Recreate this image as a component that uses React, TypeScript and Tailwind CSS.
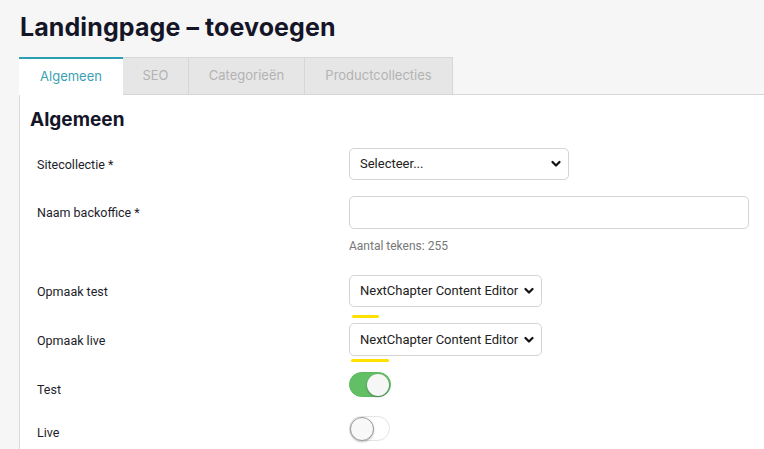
import { ReactNode } from "react";

const tabs = ["Algemeen", "SEO", "Categorieën", "Productcollecties"];

const Chevron = () => (
  <svg width="10" height="8" viewBox="0 0 10 8" className="shrink-0">
    <path d="M1.5 2 L5 5.5 L8.5 2" fill="none" stroke="#111" strokeWidth="2.2" strokeLinecap="round" strokeLinejoin="round" />
  </svg>
);

const Select = ({ value, className }: { value: string; className: string }) => (
  <div
    className={`flex items-center justify-between rounded-[5px] border border-[#d4d4d4] bg-white pl-[10px] pr-[7px] text-[13px] text-[#222] ${className}`}
  >
    <span>{value}</span>
    <Chevron />
  </div>
);

const Toggle = ({ on }: { on: boolean }) =>
  on ? (
    <div className="flex h-[25px] w-[42px] items-center justify-end rounded-full border border-[#5cb85f] bg-[#62bf65] pr-[1px]">
      <div className="h-[22px] w-[22px] rounded-full bg-[#f6f6f6] shadow-[0_1px_2px_rgba(0,0,0,0.35)]" />
    </div>
  ) : (
    <div className="flex h-[25px] w-[41px] items-center rounded-full border border-[#e4e4e4] bg-white">
      <div className="h-[24px] w-[24px] rounded-full border border-[#9a9a9a] bg-[#f8f8f8] shadow-[0_1px_2px_rgba(0,0,0,0.25)]" />
    </div>
  );

const Row = ({
  label,
  children,
  className = "",
  labelClass = "",
}: {
  label: string;
  children: ReactNode;
  className?: string;
  labelClass?: string;
}) => (
  <div className={`flex items-center ${className}`}>
    <div className={`w-[312px] shrink-0 text-[12.5px] leading-[17px] text-[#1d1d2b] ${labelClass}`}>{label}</div>
    {children}
  </div>
);

const Marker = ({ className }: { className: string }) => (
  <div className={`h-[3px] rounded-full bg-[#ffe100] ${className}`} />
);

export default function App() {
  return (
    <div className="min-h-[449px] bg-[#f6f6f6] font-['Roboto',sans-serif]">
      <h1 className="px-[20px] pt-[12px] font-['Inter',sans-serif] text-[25px] font-bold leading-[30px] tracking-[0.1px] text-[#151528]">
        Landingpage – toevoegen
      </h1>

      <div className="mt-[15px] ml-[19px] flex border-b border-[#d6d6d6] font-['Inter',sans-serif] text-[13px]">
        {tabs.map((tab, i) =>
          i === 0 ? (
            <div
              key={tab}
              className="-mb-px flex h-[38px] w-[104px] items-center justify-center border-t-2 border-[#2c9fb3] bg-white text-[#3aa0b3]"
            >
              {tab}
            </div>
          ) : (
            <div
              key={tab}
              className={`flex h-[37px] items-center justify-center border-r border-t border-[#d6d6d6] bg-[#e6e6e6] text-[#b3b3b3] ${
                i === 1 ? "w-[66px]" : i === 2 ? "w-[116px]" : "w-[148px]"
              }`}
            >
              {tab}
            </div>
          )
        )}
      </div>

      <div className="ml-[19px] min-h-[354px] border-l border-[#dcdcdc] bg-white pl-[10px] pt-[13px]">
        <h2 className="font-['Inter',sans-serif] text-[19px] font-bold leading-[24px] text-[#151528]">Algemeen</h2>

        <div className="pl-[7px]">
          <Row label="Sitecollectie *" className="mt-[16px]">
            <Select value="Selecteer..." className="h-[32px] w-[220px]" />
          </Row>

          <Row label="Naam backoffice *" className="mt-[16px]">
            <div className="h-[33px] w-[400px] rounded-[5px] border border-[#d4d4d4] bg-white" />
          </Row>
          <div className="ml-[312px] mt-[9px] text-[12px] leading-[16px] text-[#777]">Aantal tekens: 255</div>

          <Row label="Opmaak test" className="mt-[21px]">
            <Select value="NextChapter Content Editor" className="h-[32px] w-[193px]" />
          </Row>
          <Marker className="mt-[8px] ml-[315px] w-[27px]" />

          <Row label="Opmaak live" className="mt-[5px]" labelClass="pt-[1px]">
            <Select value="NextChapter Content Editor" className="h-[33px] w-[193px]" />
          </Row>
          <Marker className="mt-[3px] ml-[314px] w-[38px]" />

          <Row label="Test" className="mt-[10px] !items-start" labelClass="pt-[9px]">
            <Toggle on />
          </Row>

          <Row label="Live" className="mt-[18px] !items-start" labelClass="pt-[8px]">
            <Toggle on={false} />
          </Row>
        </div>
      </div>
    </div>
  );
}
